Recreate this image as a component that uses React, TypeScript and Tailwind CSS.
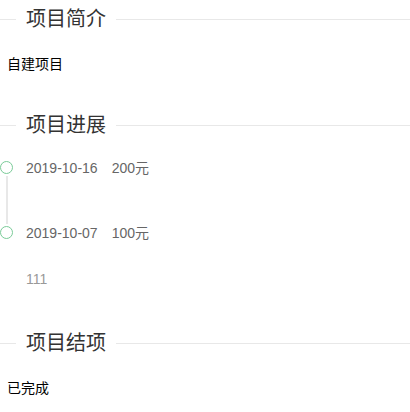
const font = { fontFamily: '"Liberation Sans", "Noto Sans CJK SC", sans-serif' };

function SectionTitle({ title, className }: { title: string; className?: string }) {
  return (
    <div className={`flex items-center h-[28px] ${className ?? ""}`}>
      <div className="w-[16px] h-px bg-[#e8e8e8]" />
      <span className="px-[10px] text-[20px] leading-[28px] text-[#333]">{title}</span>
      <div className="flex-1 h-px bg-[#e8e8e8]" />
    </div>
  );
}

const progress = [
  { date: "2019-10-16", amount: "200元", note: "" },
  { date: "2019-10-07", amount: "100元", note: "111" },
];

export default function App() {
  return (
    <div className="w-[410px] h-[412px] bg-white overflow-hidden" style={font}>
      {/* 项目简介 */}
      <SectionTitle title="项目简介" className="mt-[5px]" />
      <p className="mt-[21px] pl-[7px] text-[14px] leading-[20px] text-black">自建项目</p>

      {/* 项目进展 */}
      <SectionTitle title="项目进展" className="mt-[37px]" />
      <ul className="mt-[19px]">
        {progress.map((item, i) => {
          const last = i === progress.length - 1;
          return (
            <li key={item.date} className="flex">
              <div className="w-[13px] flex flex-col items-center pt-[3px]">
                <div className="w-[13px] h-[13px] rounded-full border-[1.5px] border-[#7acb98] bg-white shrink-0" />
                {!last && <div className="w-[2px] flex-1 bg-[#e8e8e8] mt-[2px] mb-[-1px]" />}
              </div>
              <div className={`pl-[13px] ${last ? "" : "pb-[45px]"}`}>
                <div className="text-[14px] leading-[20px] text-[#666]">
                  <span>{item.date}</span>
                  <span className="ml-[14px]">{item.amount}</span>
                </div>
                {item.note && (
                  <p className="mt-[26px] text-[14px] leading-[20px] text-[#999]">{item.note}</p>
                )}
              </div>
            </li>
          );
        })}
      </ul>

      {/* 项目结项 */}
      <SectionTitle title="项目结项" className="mt-[40px]" />
      <p className="mt-[21px] pl-[7px] text-[14px] leading-[20px] text-black">已完成</p>
    </div>
  );
}
